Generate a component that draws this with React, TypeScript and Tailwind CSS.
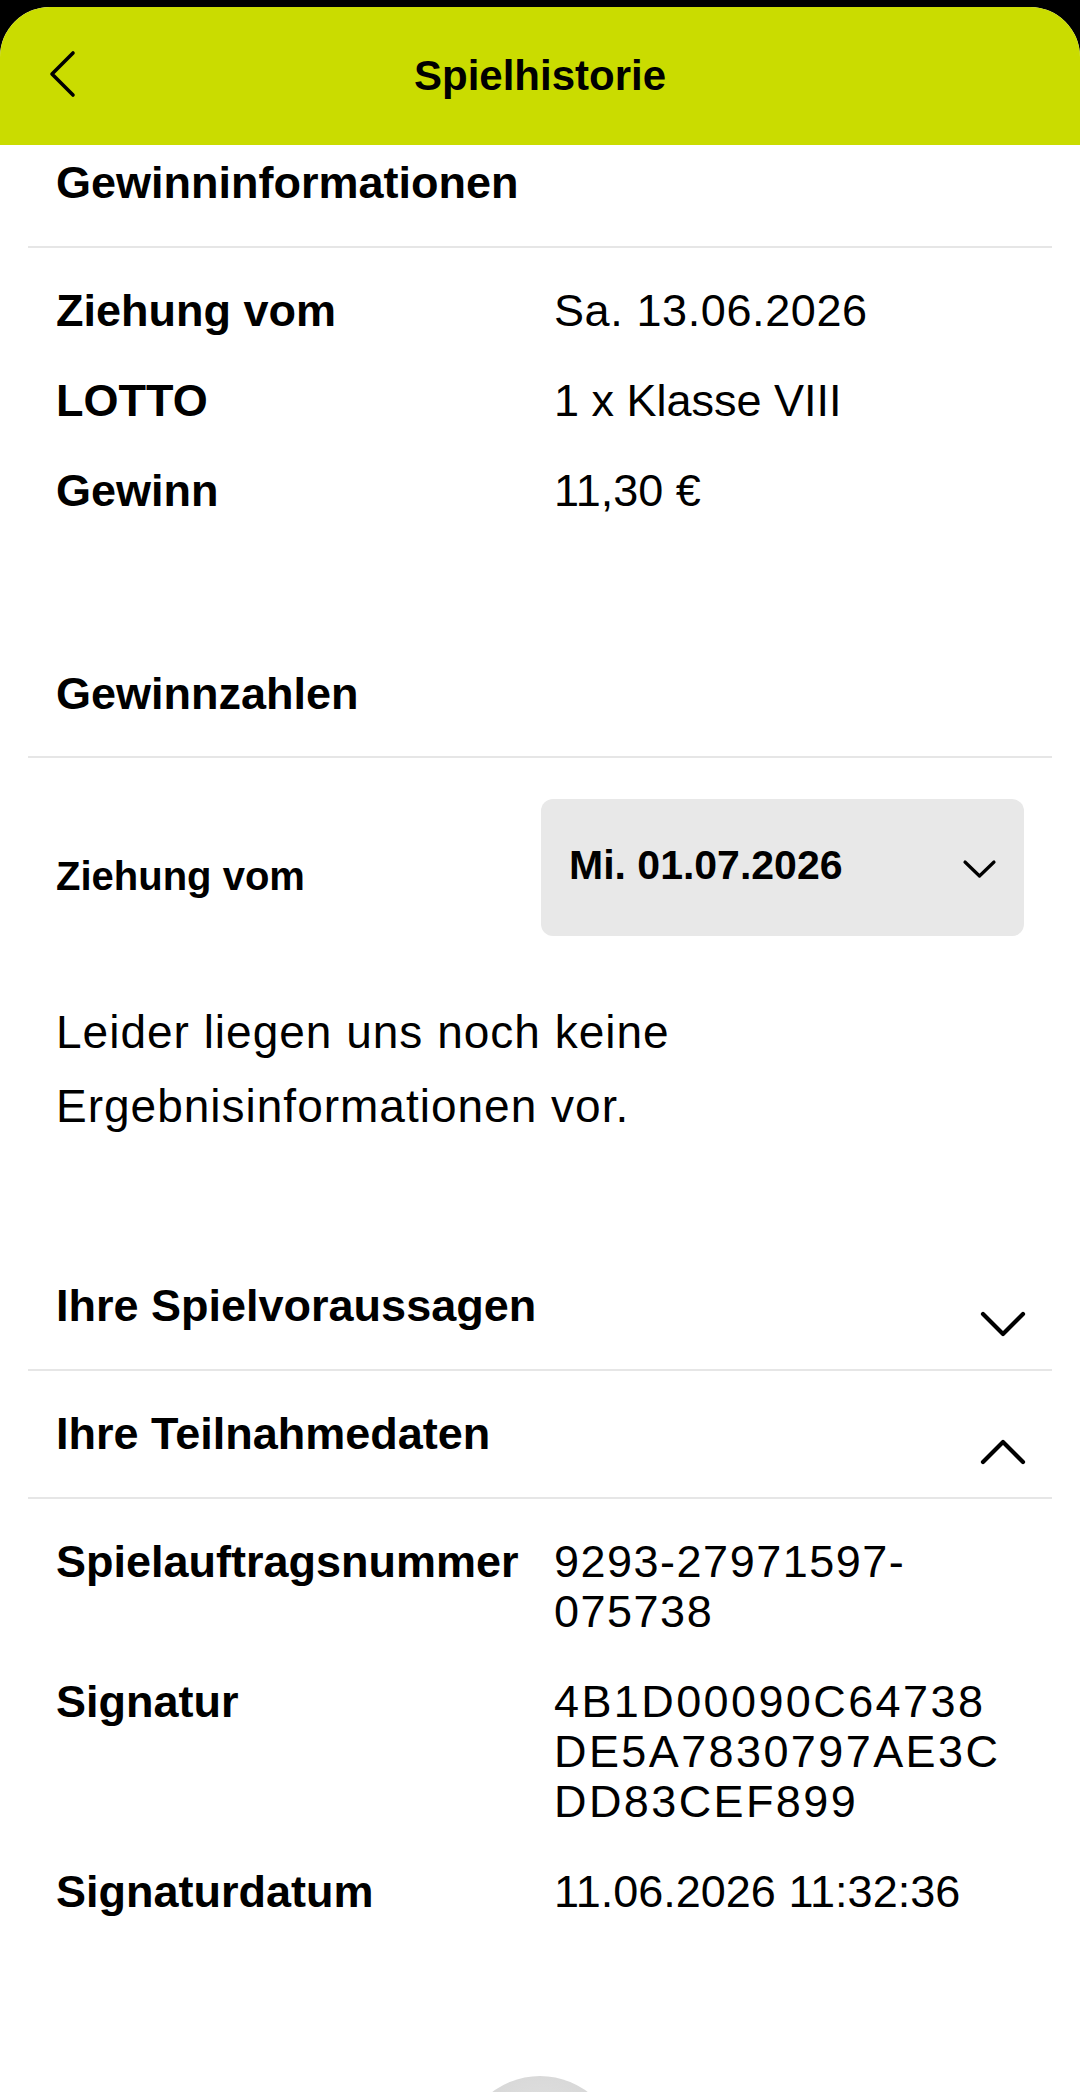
import React from "react";

function SectionHeading({ title, first }: { title: string; first?: boolean }) {
  return (
    <div
      className={
        "mx-[28px] border-b-2 border-[#e6e6e6] pl-[28px] pr-[25px] flex justify-between items-start " +
        (first ? "pt-[13px] h-[103px]" : "pt-[38px] h-[127px]")
      }
    >
      <h2 className="text-[45px] leading-[50px] font-bold">{title}</h2>
    </div>
  );
}

function AccordionHeading({ title, open }: { title: string; open?: boolean }) {
  return (
    <div className="mx-[28px] border-b-2 border-[#e6e6e6] h-[128px] pl-[28px] pr-[25px] pt-[38px] flex justify-between items-start">
      <h2 className="text-[45px] leading-[50px] font-bold">{title}</h2>
      {open ? (
        <svg width="48" height="30" viewBox="0 0 48 30" className="mt-[27px] shrink-0">
          <path d="M4 26 L24 6 L44 26" fill="none" stroke="#000" strokeWidth="4.2" strokeLinecap="round" strokeLinejoin="round" />
        </svg>
      ) : (
        <svg width="48" height="30" viewBox="0 0 48 30" className="mt-[29px] shrink-0">
          <path d="M4 4 L24 24 L44 4" fill="none" stroke="#000" strokeWidth="4.2" strokeLinecap="round" strokeLinejoin="round" />
        </svg>
      )}
    </div>
  );
}

type Row = { label: string; value: string[]; track?: string };

function InfoRows({ rows }: { rows: Row[] }) {
  return (
    <div className="pl-[56px] pr-[56px] pt-[38px] flex flex-col gap-[40px]">
      {rows.map((r) => (
        <div key={r.label} className="flex">
          <div className="w-[498px] shrink-0 text-[45px] leading-[50px] font-bold">{r.label}</div>
          <div className={"flex-1 text-[45px] leading-[50px] " + (r.track ?? "")}>
            {r.value.map((v, i) => (
              <div key={i}>{v}</div>
            ))}
          </div>
        </div>
      ))}
    </div>
  );
}

export default function App() {
  return (
    <div className="w-[1080px] h-[2092px] overflow-hidden bg-black font-['Liberation_Sans',Arial,sans-serif] text-black">
      <div className="mt-[7px] h-[2085px] bg-white rounded-t-[50px] overflow-hidden">
        {/* Header */}
        <header className="h-[138px] bg-[#cadc00] grid grid-cols-[1fr_auto_1fr] items-center">
          <div className="pl-[46px] flex items-center">
            <svg width="32" height="52" viewBox="0 0 32 52" className="mt-[-2px]">
              <path d="M27 4 L6 25 L27 46" fill="none" stroke="#000" strokeWidth="3.6" strokeLinecap="round" strokeLinejoin="round" />
            </svg>
          </div>
          <h1 className="text-[42px] leading-[50px] font-bold">Spielhistorie</h1>
          <div />
        </header>

        {/* Gewinninformationen */}
        <SectionHeading title="Gewinninformationen" first />
        <InfoRows
          rows={[
            { label: "Ziehung vom", value: ["Sa. 13.06.2026"], track: "tracking-[0.6px]" },
            { label: "LOTTO", value: ["1 x Klasse VIII"] },
            { label: "Gewinn", value: ["11,30 €"] },
          ]}
        />

        {/* Gewinnzahlen */}
        <div className="mt-[115px]">
          <SectionHeading title="Gewinnzahlen" />
        </div>
        <div className="pl-[56px] pr-[56px] mt-[41px] flex items-start">
          <div className="flex-1 mt-[54px] text-[40px] leading-[46px] font-bold">Ziehung vom</div>
          <div className="w-[483px] h-[137px] shrink-0 rounded-[12px] bg-[#e8e8e8] pl-[28px] pr-[25px] pb-[6px] flex items-center justify-between">
            <span className="text-[41px] leading-[46px] font-bold">Mi. 01.07.2026</span>
            <svg width="38" height="24" viewBox="0 0 38 24" className="mt-[10px]">
              <path d="M4 4 L18.5 18 L33 4" fill="none" stroke="#000" strokeWidth="3.2" strokeLinecap="round" strokeLinejoin="round" />
            </svg>
          </div>
        </div>
        <p className="pl-[56px] pr-[56px] mt-[59px] text-[46px] leading-[74px] tracking-[1px]">
          Leider liegen uns noch keine
          <br />
          Ergebnisinformationen vor.
        </p>

        {/* Accordions */}
        <div className="mt-[100px]">
          <AccordionHeading title="Ihre Spielvoraussagen" />
          <AccordionHeading title="Ihre Teilnahmedaten" open />
        </div>
        <InfoRows
          rows={[
            { label: "Spielauftragsnummer", value: ["9293-27971597-", "075738"], track: "tracking-[1.5px]" },
            { label: "Signatur", value: ["4B1D00090C64738", "DE5A7830797AE3C", "DD83CEF899"], track: "tracking-[2.4px]" },
            { label: "Signaturdatum", value: ["11.06.2026 11:32:36"] },
          ]}
        />

        <div className="mt-[159px] mx-auto w-[158px] h-[158px] rounded-full bg-[radial-gradient(circle_at_50%_35%,#e2e2e2,#cdcdcd)]" />
      </div>
    </div>
  );
}
